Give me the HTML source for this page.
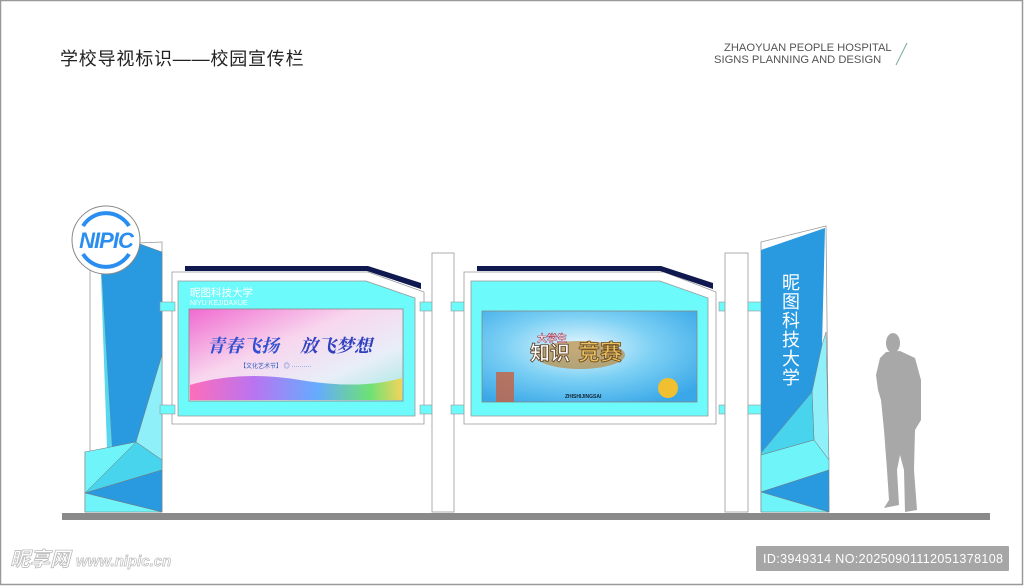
<!DOCTYPE html>
<html><head><meta charset="utf-8"><style>
html,body{margin:0;padding:0;background:#fff}
body{width:1024px;height:586px;overflow:hidden;position:relative;font-family:"Liberation Sans","Noto Sans CJK SC",sans-serif}
</style></head><body>
<svg width="1024" height="586" viewBox="0 0 1024 586" xmlns="http://www.w3.org/2000/svg" style="position:absolute;left:0;top:0">
<defs>
<linearGradient id="g1" x1="0" y1="0" x2="1" y2="1">
<stop offset="0" stop-color="#f06ad0"/><stop offset="0.4" stop-color="#f8d6ee"/><stop offset="0.7" stop-color="#e8eef8"/><stop offset="1" stop-color="#9ee8e0"/></linearGradient>
<linearGradient id="g1b" x1="0" y1="0" x2="1" y2="0">
<stop offset="0" stop-color="#ff5ab0"/><stop offset="0.3" stop-color="#b060f0"/><stop offset="0.6" stop-color="#50a0ff"/><stop offset="0.85" stop-color="#60e060"/><stop offset="1" stop-color="#ffd040"/></linearGradient>
<radialGradient id="g2" cx="0.45" cy="0.4" r="0.7">
<stop offset="0" stop-color="#e8f8ff"/><stop offset="0.5" stop-color="#7cd0f4"/><stop offset="1" stop-color="#3aa8e8"/></radialGradient>
</defs>
<rect x="0.5" y="0.5" width="1022" height="584" fill="none" stroke="#999" stroke-width="1.5"/>
<text x="60" y="65" font-size="18" fill="#222" font-family="Liberation Sans,Noto Sans CJK SC,sans-serif" letter-spacing="0.8">学校导视标识——校园宣传栏</text>
<text x="724" y="51" font-size="11.2" fill="#555">ZHAOYUAN PEOPLE HOSPITAL</text>
<text x="714" y="63" font-size="11.2" fill="#555">SIGNS PLANNING AND DESIGN</text>
<line x1="907" y1="43" x2="896" y2="65" stroke="#7a9" stroke-width="1"/>

<rect x="62" y="513" width="928" height="7" fill="#8a8a8a"/>

<polygon points="90,245 162,242 162,512 85,512 85,452 90,452" fill="#fff" stroke="#999" stroke-width="0.8"/>
<polygon points="100,248 140,244 162,252 162,355 136,442 112,447" fill="#2a9ae0" stroke="#777" stroke-width="0.5"/>
<polygon points="100,248 112,447 107,448" fill="#58d8ee"/>
<polygon points="162,355 136,442 162,460" fill="#8ff0fa" stroke="#777" stroke-width="0.5"/>
<polygon points="85,452 136,442 85,493" fill="#6ff4fa" stroke="#777" stroke-width="0.5"/>
<polygon points="136,442 162,460 162,470 85,493" fill="#48d4ec" stroke="#777" stroke-width="0.5"/>
<polygon points="85,493 162,470 162,512" fill="#2a9ae0" stroke="#777" stroke-width="0.5"/>
<polygon points="85,493 162,512 85,512" fill="#6ff4fa" stroke="#777" stroke-width="0.5"/>
<circle cx="106" cy="240" r="34" fill="#fff" stroke="#888" stroke-width="1"/>
<path d="M83,226 A27,27 0 0 1 129,226" fill="none" stroke="#2a8ef0" stroke-width="4"/>
<path d="M83,254 A27,27 0 0 0 129,254" fill="none" stroke="#2a8ef0" stroke-width="4"/>
<text x="106" y="248" font-size="22" font-weight="bold" font-style="italic" fill="#2a8ef0" text-anchor="middle" letter-spacing="-1">NIPIC</text>

<polygon points="172,272 368,272 424,292 424,424 172,424" fill="#fff" stroke="#999" stroke-width="0.8"/>
<polygon points="185,266 368,266 421,283 421,289 367,271 185,271" fill="#101850"/>
<polygon points="178,281 366,281 415,298 415,416 178,416" fill="#6cfafa" stroke="#999" stroke-width="0.8"/>
<text x="190" y="296" font-size="10.5" fill="#fff">昵图科技大学</text>
<text x="190" y="305" font-size="7" fill="#fff">NIYU KEJIDAXUE</text>
<rect x="189" y="309" width="214" height="92" fill="url(#g1)" stroke="#888" stroke-width="0.8"/>
<path d="M190,385 Q240,370 300,380 T402,378 L402,400 L190,400Z" fill="url(#g1b)" opacity="0.85"/>
<text x="207" y="352" font-size="18" font-weight="bold" font-style="italic" fill="#3050d0" font-family="Noto Serif CJK SC,serif">青春飞扬</text>
<text x="300" y="352" font-size="18" font-weight="bold" font-style="italic" fill="#3040c0" font-family="Noto Serif CJK SC,serif">放飞梦想</text>
<text x="240" y="368" font-size="6" fill="#3060c0">【文化艺术节】 ◎ ··········</text>
<rect x="160" y="302" width="15" height="9" fill="#6cfafa" stroke="#999" stroke-width="0.6"/>
<rect x="160" y="405" width="15" height="9" fill="#6cfafa" stroke="#999" stroke-width="0.6"/>
<rect x="420" y="302" width="17" height="9" fill="#6cfafa" stroke="#999" stroke-width="0.6"/>
<rect x="420" y="405" width="17" height="9" fill="#6cfafa" stroke="#999" stroke-width="0.6"/>

<rect x="432" y="253" width="22" height="259" fill="#fff" stroke="#999" stroke-width="0.8"/>
<rect x="451" y="302" width="17" height="9" fill="#6cfafa" stroke="#999" stroke-width="0.6"/>
<rect x="451" y="405" width="17" height="9" fill="#6cfafa" stroke="#999" stroke-width="0.6"/>

<polygon points="464,272 664,272 716,292 716,424 464,424" fill="#fff" stroke="#999" stroke-width="0.8"/>
<polygon points="477,266 661,266 713,283 713,289 660,271 477,271" fill="#101850"/>
<polygon points="471,281 660,281 708,298 708,416 471,416" fill="#6cfafa" stroke="#999" stroke-width="0.8"/>
<rect x="482" y="311" width="215" height="91" fill="url(#g2)" stroke="#888" stroke-width="0.8"/>
<ellipse cx="580" cy="355" rx="45" ry="14" fill="#b88a40" opacity="0.7"/>
<text x="530" y="360" font-size="20" font-weight="bold" fill="#fff" stroke="#5a3a20" stroke-width="0.8">知识</text>
<text x="578" y="360" font-size="22" font-weight="bold" fill="#e8c060" stroke="#6a4a20" stroke-width="0.8">竞赛</text>
<text x="537" y="342" font-size="10" font-weight="bold" fill="#fff" stroke="#a02040" stroke-width="0.5">大学生</text>
<rect x="496" y="372" width="18" height="30" fill="#c86040" opacity="0.8"/>
<circle cx="668" cy="388" r="10" fill="#f0c030"/>
<text x="565" y="398" font-size="5" fill="#123" font-weight="bold">ZHISHIJINGSAI</text>
<rect x="719" y="302" width="17" height="9" fill="#6cfafa" stroke="#999" stroke-width="0.6"/>
<rect x="719" y="405" width="17" height="9" fill="#6cfafa" stroke="#999" stroke-width="0.6"/>

<rect x="725" y="253" width="23" height="259" fill="#fff" stroke="#999" stroke-width="0.8"/>
<rect x="748" y="302" width="16" height="9" fill="#6cfafa" stroke="#999" stroke-width="0.6"/>
<rect x="748" y="405" width="16" height="9" fill="#6cfafa" stroke="#999" stroke-width="0.6"/>

<polygon points="761,242 826,226 829,512 761,512" fill="#fff" stroke="#999" stroke-width="0.8"/>
<polygon points="761,250 825,228 822,345 812,392 761,453" fill="#2a9ae0"/>
<polygon points="822,345 826,332 829,460 814,440 812,392" fill="#8ff0fa" stroke="#777" stroke-width="0.5"/>
<polygon points="761,453 812,392 814,440 761,455" fill="#48d4ec" stroke="#777" stroke-width="0.5"/>
<polygon points="761,455 814,440 829,460 829,470 761,492" fill="#6ff4fa" stroke="#777" stroke-width="0.5"/>
<polygon points="761,492 829,470 829,512" fill="#2a9ae0" stroke="#777" stroke-width="0.5"/>
<polygon points="761,492 829,512 761,512" fill="#6ff4fa" stroke="#777" stroke-width="0.5"/>
<g font-size="18" fill="#fff" text-anchor="middle">
<text x="791" y="289">昵</text><text x="791" y="308">图</text><text x="791" y="327">科</text>
<text x="791" y="346">技</text><text x="791" y="365">大</text><text x="791" y="384">学</text></g>

<g fill="#a8a8a8">
<ellipse cx="893" cy="343" rx="7" ry="10"/>
<path d="M886,352 L900,351 L915,358 L921,380 L921,420 L915,430 L914,470 L917,510 L905,512 L904,470 L900,455 L897,470 L899,505 L884,508 L889,500 L887,470 L884,430 L881,400 L878,390 L876,375 L880,358 Z"/>
</g>

<text x="10" y="566" font-size="20" font-style="italic" font-weight="bold" fill="#fff" stroke="#bbb" stroke-width="0.8">昵享网</text>
<text x="76" y="566" font-size="15" font-style="italic" font-weight="bold" fill="#fff" stroke="#bbb" stroke-width="0.7">www.nipic.cn</text>
<rect x="756" y="546" width="253" height="25" rx="1" fill="#a6a6a6"/>
<text x="763" y="563" font-size="12.5" fill="#fff" textLength="240">ID:3949314 NO:20250901112051378108</text>
</svg>
</body></html>
